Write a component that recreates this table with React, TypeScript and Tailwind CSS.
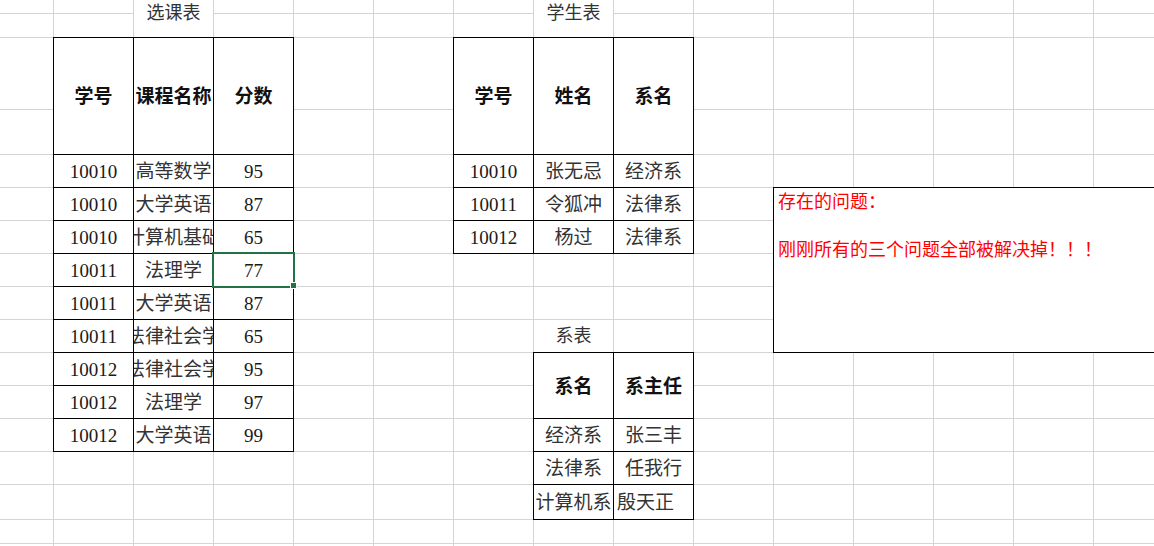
import React from "react";

const sheetGrid =
  "grid grid-cols-[54px_repeat(14,80px)] grid-rows-[14px_24px_72px_45px_repeat(10,33px)_35px_24px_30px]";

const courses = [
  ["10010", "高等数学", "95"],
  ["10010", "大学英语", "87"],
  ["10010", "计算机基础", "65"],
  ["10011", "法理学", "77"],
  ["10011", "大学英语", "87"],
  ["10011", "法律社会学", "65"],
  ["10012", "法律社会学", "95"],
  ["10012", "法理学", "97"],
  ["10012", "大学英语", "99"],
];

const students = [
  ["10010", "张无忌", "经济系"],
  ["10011", "令狐冲", "法律系"],
  ["10012", "杨过", "法律系"],
];

const depts = [
  ["经济系", "张三丰"],
  ["法律系", "任我行"],
  ["计算机系", "殷天正"],
];

function Cell({ children, className = "" }: { children?: React.ReactNode; className?: string }) {
  return (
    <div
      className={`-ml-px -mt-px flex items-center justify-center overflow-hidden whitespace-nowrap border border-black bg-white pt-[3px] text-[19px] text-[#1a1a1a] ${className}`}
    >
      <span className="shrink-0">{children}</span>
    </div>
  );
}

function HeadCell({ children }: { children: React.ReactNode }) {
  return <Cell className="row-span-2 font-bold text-[#111]">{children}</Cell>;
}

function Title({ children, className = "" }: { children: React.ReactNode; className?: string }) {
  return (
    <div
      className={`flex items-center justify-center border-r border-b border-[#d4d4d4] bg-white text-[18px] leading-[18px] text-[#333] ${className}`}
    >
      {children}
    </div>
  );
}

export default function App() {
  return (
    <div className="h-[546px] w-[1154px] overflow-hidden bg-white font-['Liberation_Serif','Noto_Sans_CJK_SC',serif]">
      <div className="grid">
        {/* gridlines */}
        <div className={`col-start-1 row-start-1 ${sheetGrid}`}>
          {Array.from({ length: 15 * 17 }).map((_, i) => (
            <div key={i} className="border-r border-b border-[#d4d4d4]" />
          ))}
        </div>

        {/* content */}
        <div className={`col-start-1 row-start-1 ${sheetGrid}`}>
          <Title className="col-start-3 row-start-1 row-span-2 pb-[11px]">选课表</Title>
          <Title className="col-start-8 row-start-1 row-span-2 pb-[11px]">学生表</Title>
          <Title className="col-start-8 row-start-10">系表</Title>

          <div className="col-start-2 col-span-3 row-start-3 row-span-11 grid grid-cols-subgrid grid-rows-subgrid">
            <HeadCell>学号</HeadCell>
            <HeadCell>课程名称</HeadCell>
            <HeadCell>分数</HeadCell>
            {courses.map((row, i) => (
              <React.Fragment key={i}>
                <Cell>{row[0]}</Cell>
                <Cell className="text-[#333]">{row[1]}</Cell>
                <Cell>{row[2]}</Cell>
              </React.Fragment>
            ))}
          </div>

          <div className="col-start-7 col-span-3 row-start-3 row-span-5 grid grid-cols-subgrid grid-rows-subgrid">
            <HeadCell>学号</HeadCell>
            <HeadCell>姓名</HeadCell>
            <HeadCell>系名</HeadCell>
            {students.map((row, i) => (
              <React.Fragment key={i}>
                <Cell>{row[0]}</Cell>
                <Cell className="text-[#333]">{row[1]}</Cell>
                <Cell className="text-[#333]">{row[2]}</Cell>
              </React.Fragment>
            ))}
          </div>

          <div className="col-start-8 col-span-2 row-start-11 row-span-5 grid grid-cols-subgrid grid-rows-subgrid">
            <HeadCell>系名</HeadCell>
            <HeadCell>系主任</HeadCell>
            {depts.map((row, i) => (
              <React.Fragment key={i}>
                <Cell className="text-[#333]">{row[0]}</Cell>
                <Cell className={i === 2 ? "justify-start pl-[3px] text-[#333]" : "text-[#333]"}>{row[1]}</Cell>
              </React.Fragment>
            ))}
          </div>

          {/* floating text box */}
          <div className="col-start-11 col-span-5 row-start-6 row-span-5 -ml-px -mt-px border border-black bg-white px-[4px] pt-[2px] text-[18px] leading-[24px] text-[#ff0000]">
            <p>存在的问题：</p>
            <p>&nbsp;</p>
            <p>刚刚所有的三个问题全部被解决掉！！！</p>
          </div>

          {/* active cell */}
          <div className="pointer-events-none relative col-start-4 row-start-8">
            <div className="absolute -top-[2px] -right-[1px] -bottom-[1px] -left-[2px] border-2 border-[#217346]" />
            <div className="absolute -right-[3px] -bottom-[2px] h-[7px] w-[7px] border border-white bg-[#217346]" />
          </div>
        </div>
      </div>
    </div>
  );
}
